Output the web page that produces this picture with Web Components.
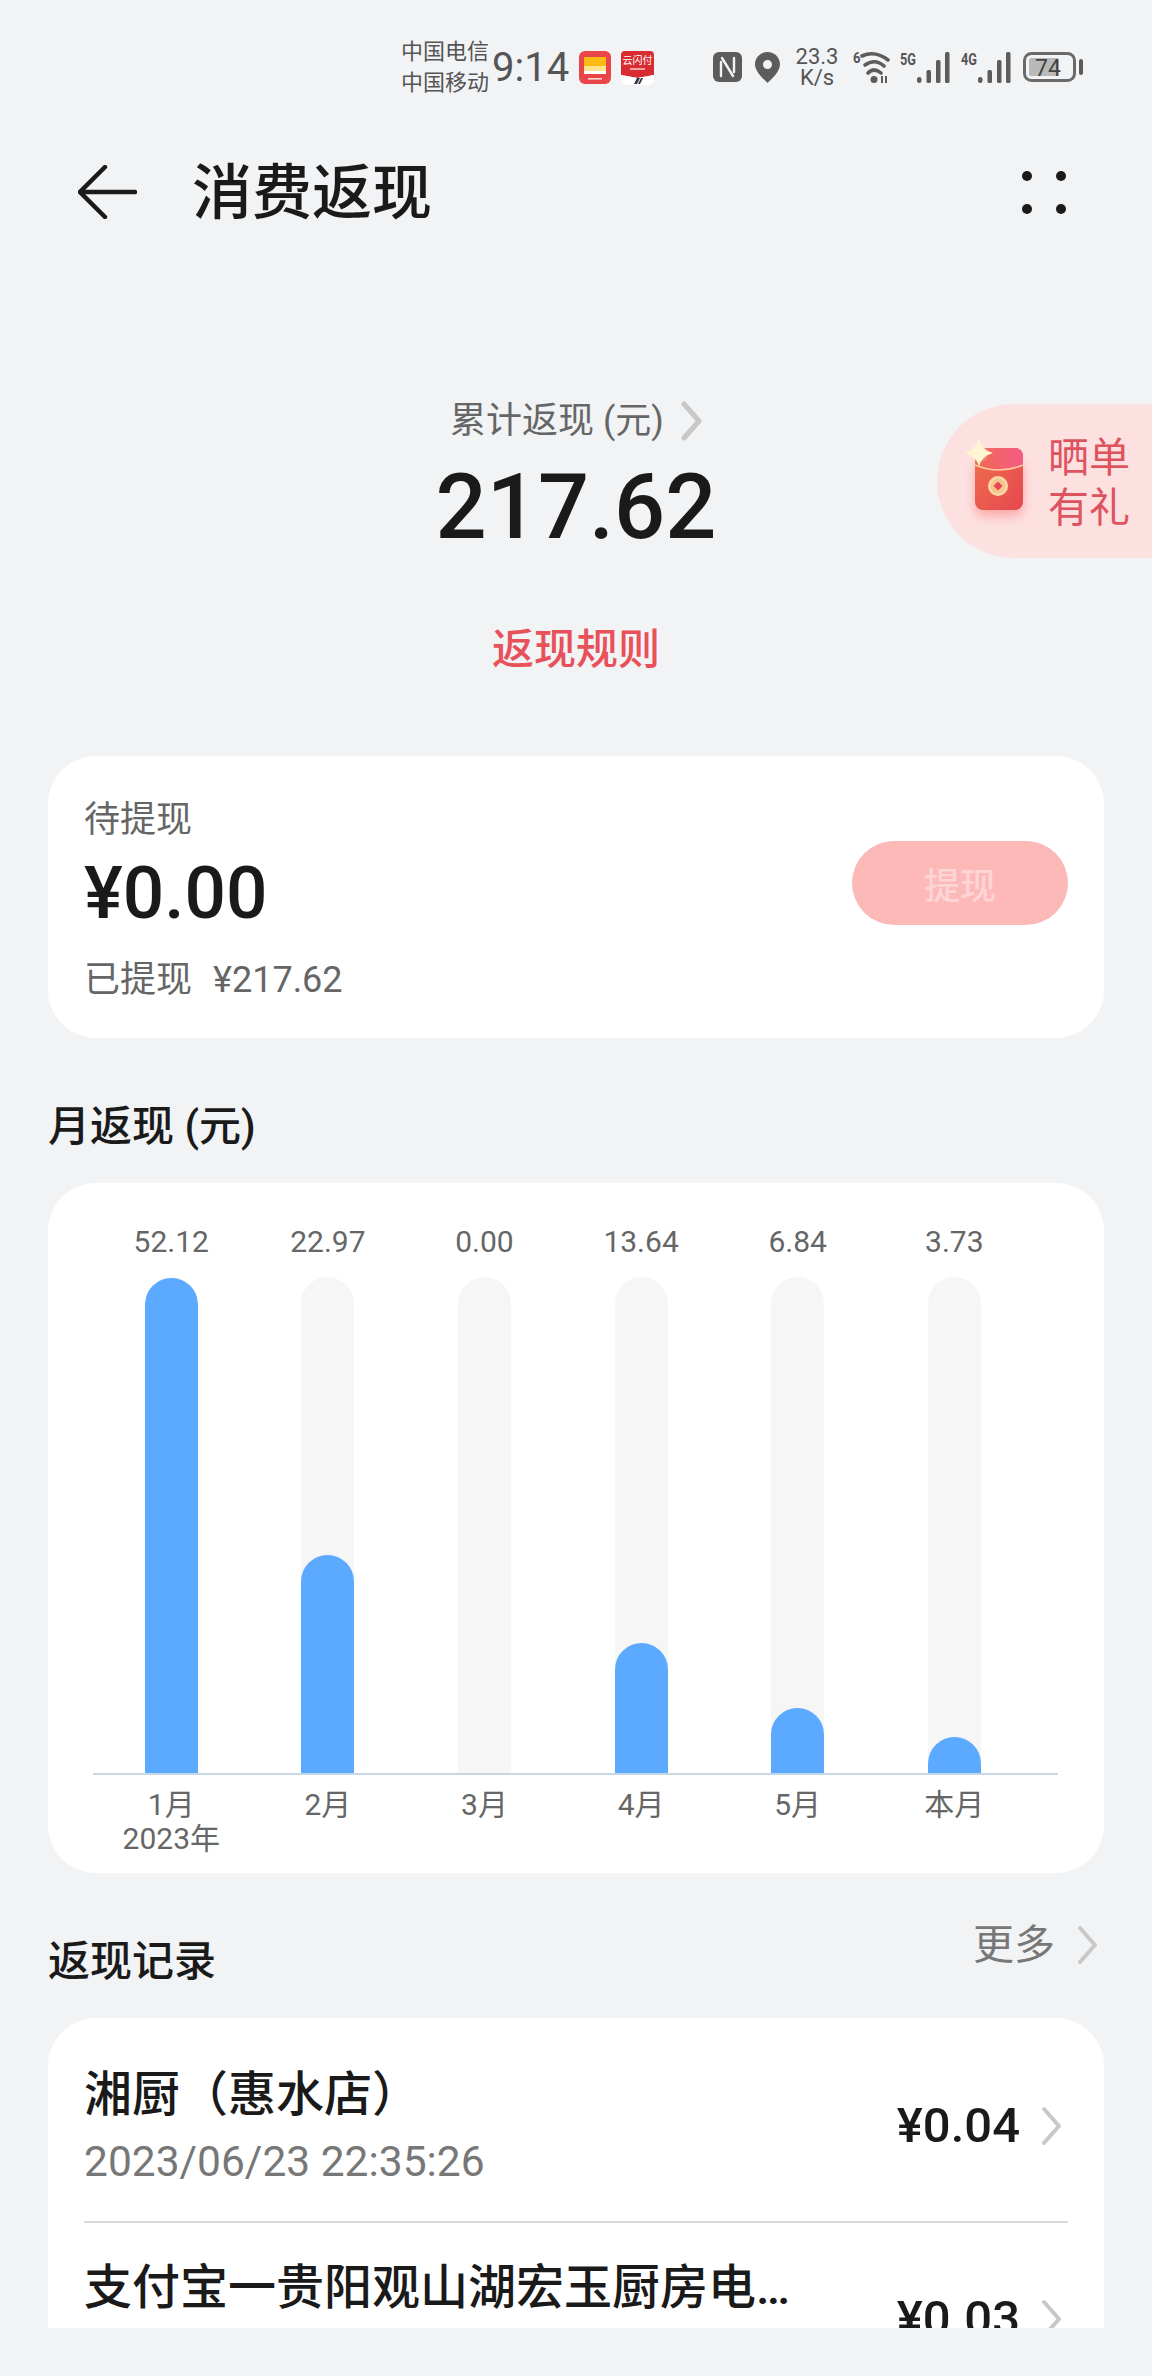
<!DOCTYPE html>
<html>
<head>
<meta charset="utf-8">
<title>消费返现</title>
<style>
	html,body{margin:0;padding:0;background:#f1f3f5;}
	body{font-family:Roboto,"Noto Sans CJK SC",sans-serif;color:#1a1a1a;}
	cash-page{height:2376px;}
</style>
</head>
<body>

<template id="tpl-page">
	<style>
		:host{display:block;position:relative;overflow:hidden;}
		.content{display:flex;flex-direction:column;padding:0 48px;height:2044px;overflow:hidden;box-sizing:border-box;}
	</style>
	<status-bar></status-bar>
	<top-bar>消费返现</top-bar>
	<share-badge></share-badge>
	<div class="content">
		<cash-summary></cash-summary>
		<withdraw-card></withdraw-card>
		<section-head style="height:145px">月返现 (元)</section-head>
		<month-chart></month-chart>
		<section-head style="height:145px" more>返现记录</section-head>
		<record-list>
			<record-row name="湘厨（惠水店）" time="2023/06/23 22:35:26" price="¥0.04"></record-row>
			<record-row name="支付宝一贵阳观山湖宏玉厨房电…" price="¥0.03"></record-row>
		</record-list>
	</div>
</template>

<script>
	function shadow(el, html){
		el.attachShadow({mode:'open'}).innerHTML = html;
	}
	const chev = (w,h,c,sw) => `<svg width="${w}" height="${h}" viewBox="0 0 21 40" fill="none"><path d="M3 3 L18 20 L3 37" stroke="${c}" stroke-width="${sw}" stroke-linecap="round" stroke-linejoin="round"/></svg>`;

	class CashPage extends HTMLElement{
		constructor(){
			super();
			this.attachShadow({mode:'open'}).appendChild(document.getElementById('tpl-page').content.cloneNode(true));
		}
	}

	class StatusBar extends HTMLElement{
		constructor(){
			super();
			// barras de senal, la misma para 5G y 4G
			const bars = `<rect x="0" y="25" width="4.500" height="6" rx="2.200"/><rect x="9.500" y="18" width="4.500" height="13" rx="1.500"/><rect x="19" y="8" width="4.500" height="23" rx="1.500"/><rect x="28" y="0" width="4.500" height="31" rx="1.500"/>`;
			shadow(this, `
			<style>
				:host{display:block;position:relative;height:100px;color:#555;}
				.row{display:flex;align-items:flex-start;padding:36px 0 0 401px;}
				.ops{font-size:22px;line-height:31px;width:91px;}
				.time{font-size:40px;line-height:46px;width:87px;margin-top:9px;}
				svg{display:block;flex:none;}
				.speed{width:46px;text-align:center;font-size:22px;line-height:21px;margin:10px 13px 0 14px;}
				text{font-family:Roboto,"Noto Sans CJK SC",sans-serif;}
			</style>
			<div class="row">
				<div class="ops">中国电信<br>中国移动</div>
				<div class="time">9:14</div>
				<svg style="margin:15px 10px 0 0" width="32" height="33" viewBox="0 0 32 33">
					<rect width="32" height="33" rx="6" fill="#ea4549"/>
					<rect x="5" y="6" width="22" height="9" fill="#fdbb12"/>
					<rect x="5" y="15" width="22" height="5" fill="#fde38a"/>
					<rect x="5" y="20" width="22" height="3" fill="#fff"/>
					<rect x="9" y="27" width="14" height="1.600" fill="#fbd5d5"/>
				</svg>
				<svg style="margin:15px 0 0 0" width="33" height="34" viewBox="0 0 33 34">
					<path d="M4 0H29a4 4 0 0 1 4 4V24L16.500 27 0 24V4a4 4 0 0 1 4-4Z" fill="#d92c32"/>
					<path d="M0 24L16.500 27 33 24V28a6 6 0 0 1-6 6H6a6 6 0 0 1-6-6Z" fill="#fff"/>
					<text x="16.500" y="13" font-size="10" fill="#fff" text-anchor="middle">云闪付</text>
					<rect x="9" y="17" width="15" height="2" fill="#f2a0a0"/>
					<path d="M13 33l3-6h3l-3 6ZM17 33l3-6h2l-3 6Z" fill="#334"/>
				</svg>
				<svg style="margin:16px 0 0 59px" width="29" height="30" viewBox="0 0 29 30">
					<rect width="29" height="30" rx="6" fill="#5c5c5c"/>
					<path d="M8 10 V24 M9 6 L20 24 M21 20 V6" stroke="#f1f3f5" stroke-width="2.400" fill="none" stroke-linecap="round"/>
				</svg>
				<svg style="margin:16px 0 0 13px" width="25" height="31" viewBox="0 0 25 31">
					<path fill-rule="evenodd" d="M12.500 0C5.600 0 0 5.500 0 12.300 0 20 9 27.500 12.500 31 16 27.500 25 20 25 12.300 25 5.500 19.400 0 12.500 0Zm0 8a4.500 4.500 0 1 1 0 9 4.500 4.500 0 0 1 0-9Z" fill="#5c5c5c"/>
				</svg>
				<div class="speed">23.3<br>K/s</div>
				<svg style="margin:15px 0 0 0" width="37" height="33" viewBox="0 0 37 33">
					<text x="0" y="12" font-size="15" font-weight="700" fill="#555" textLength="7.500" lengthAdjust="spacingAndGlyphs">6</text>
					<g fill="none" stroke="#5c5c5c" stroke-width="3.600" stroke-linecap="round">
						<path d="M9 5 Q22 -1 35 9"/><path d="M12 14 Q22 7 31 15"/><path d="M15 22 Q21 16 28 22"/>
					</g>
					<circle cx="21" cy="28.500" r="3.500" fill="#5c5c5c"/>
					<path d="M29 25v7M33 25v7" stroke="#5c5c5c" stroke-width="2"/>
				</svg>
				<svg style="margin:15px 0 0 10px" width="50" height="32" viewBox="0 0 50 32">
					<text x="0" y="14" font-size="16" font-weight="700" fill="#555" textLength="16" lengthAdjust="spacingAndGlyphs">5G</text>
					<g fill="#5c5c5c" transform="translate(17 1)">${bars}</g>
				</svg>
				<svg style="margin:15px 0 0 11px" width="50" height="32" viewBox="0 0 50 32">
					<text x="0" y="14" font-size="16" font-weight="700" fill="#555" textLength="16" lengthAdjust="spacingAndGlyphs">4G</text>
					<g fill="#5c5c5c" transform="translate(17 1)">${bars}</g>
				</svg>
				<svg style="margin:16px 0 0 12px" width="60" height="31" viewBox="0 0 60 31">
					<rect x="1.500" y="1.500" width="50" height="27" rx="7" fill="none" stroke="#6a6a6a" stroke-width="3"/>
					<rect x="6" y="6" width="30" height="18" rx="2" fill="#b9b9b9"/>
					<rect x="56" y="7" width="4" height="16" rx="2" fill="#5c5c5c"/>
					<text x="25" y="23.500" font-size="23" fill="#444" text-anchor="middle">74</text>
				</svg>
			</div>`);
		}
	}

	class TopBar extends HTMLElement{
		constructor(){
			super();
			shadow(this, `
			<style>
				:host{display:flex;align-items:center;height:184px;box-sizing:border-box;padding:0 86px 0 78px;}
				.title{font-size:60px;font-weight:500;margin:3px 0 0 55px;line-height:70px;color:#1a1a1a;}
				.dots{margin-left:auto;display:grid;grid-template-columns:10px 10px;gap:23px 24px;}
				.dots i{width:10px;height:10px;border-radius:50%;background:#1a1a1a;}
			</style>
			<svg width="59" height="54" viewBox="0 0 59 54" fill="none" stroke="#1a1a1a" stroke-width="4.500" stroke-linecap="round"><path d="M27 2 L2 27 L27 52"/><path d="M3 27 H57"/></svg>
			<div class="title"><slot></slot></div>
			<div class="dots"><i></i><i></i><i></i><i></i></div>`);
		}
	}

	class ShareBadge extends HTMLElement{
		constructor(){
			super();
			shadow(this, `
			<style>
				:host{position:absolute;left:937px;top:404px;width:215px;height:154px;border-radius:77px 0 0 77px;background:#fde1e1;display:flex;align-items:center;}
				svg{margin:0 0 18px 24px;flex:none;overflow:visible;}
				.txt{margin:4px 0 0 19px;font-size:41px;line-height:50px;color:#dd5460;}
			</style>
			<svg width="68" height="80" viewBox="0 0 68 80">
				<defs>
					<linearGradient id="r1" x1="0" y1="0" x2="1" y2="1"><stop offset="0" stop-color="#f0704e"/><stop offset="1" stop-color="#e5474f"/></linearGradient>
					<linearGradient id="r2" x1="0" y1="0" x2="1" y2="0"><stop offset="0" stop-color="#f06a50"/><stop offset="1" stop-color="#f45c86"/></linearGradient>
					<filter id="b1" x="-40%" y="-40%" width="180%" height="180%"><feGaussianBlur stdDeviation="6"/></filter>
					<filter id="b2" x="-40%" y="-40%" width="180%" height="180%"><feGaussianBlur stdDeviation="2"/></filter>
				</defs>
				<rect x="14" y="30" width="48" height="54" rx="8" fill="#fb8f8f" opacity=".7" filter="url(#b1)"/>
				<rect x="14" y="16" width="48" height="62" rx="8" fill="url(#r1)"/>
				<path d="M14 24a8 8 0 0 1 8-8H54a8 8 0 0 1 8 8V32Q38 44 14 32Z" fill="url(#r2)"/>
				<path d="M14 33Q38 43 62 33" stroke="#ffc9a0" stroke-width="1.500" fill="none"/>
				<circle cx="37" cy="54" r="10" fill="#fcd9a8"/>
				<circle cx="37" cy="54" r="7.500" fill="#f6c48e"/>
				<rect x="33.800" y="50.800" width="6.400" height="6.400" transform="rotate(45 37 54)" fill="#e2484f"/>
				<g transform="translate(4 7)">
					<circle cx="14" cy="14" r="7" fill="#fff3c8" opacity=".8" filter="url(#b2)"/>
					<path d="M14 0 Q16 11 28 14 Q16 17 14 28 Q12 17 0 14 Q12 11 14 0Z" fill="#fff6d4"/>
				</g>
			</svg>
			<div class="txt">晒单<br>有礼</div>`);
		}
	}

	class CashSummary extends HTMLElement{
		constructor(){
			super();
			shadow(this, `
			<style>
				:host{display:flex;flex-direction:column;align-items:center;height:472px;box-sizing:border-box;padding-top:116px;}
				.lbl{display:flex;align-items:center;font-size:36px;line-height:42px;color:#666;height:42px;}
				.lbl svg{margin-left:17px;}
				.num{font-size:90px;font-weight:500;line-height:104px;margin-top:14px;color:#1a1a1a;}
				.rule{font-size:42px;font-weight:500;line-height:48px;color:#e8505a;margin-top:66px;}
			</style>
			<div class="lbl">累计返现 (元)${chev(21,40,'#c8c8c8',5)}</div>
			<div class="num">217.62</div>
			<div class="rule">返现规则</div>`);
		}
	}

	class WithdrawCard extends HTMLElement{
		constructor(){
			super();
			shadow(this, `
			<style>
				:host{display:flex;align-items:center;justify-content:space-between;height:282px;flex:none;box-sizing:border-box;padding:0 36px;background:#fff;border-radius:48px;}
				.l{display:flex;flex-direction:column;padding-top:6px;}
				.a{font-size:36px;line-height:42px;color:#666;}
				.b{font-size:73px;font-weight:500;line-height:86px;margin-top:9px;color:#1a1a1a;}
				.c{font-size:36px;line-height:42px;color:#666;margin-top:23px;display:flex;gap:21px;}
				.btn{width:216px;height:84px;margin-bottom:29px;border-radius:42px;background:#fdb8b8;color:#fdd5d5;font-size:36px;font-weight:500;display:flex;align-items:center;justify-content:center;}
			</style>
			<div class="l">
				<div class="a">待提现</div>
				<div class="b">¥0.00</div>
				<div class="c"><span>已提现</span><span>¥217.62</span></div>
			</div>
			<div class="btn">提现</div>`);
		}
	}

	class SectionHead extends HTMLElement{
		constructor(){
			super();
			const more = this.hasAttribute('more');
			shadow(this, `
			<style>
				:host{display:flex;flex:none;box-sizing:border-box;align-items:flex-start;justify-content:space-between;}
				.t{font-size:42px;line-height:48px;font-weight:500;color:#1a1a1a;margin-top:65px;}
				.m{display:flex;align-items:center;gap:22px;font-size:41px;line-height:48px;color:#777;margin-top:48px;margin-right:6px;}
			</style>
			<div class="t"><slot></slot></div>
			${more ? `<div class="m">更多${chev(21,40,'#c8c8c8',4)}</div>` : ''}`);
		}
	}

	class MonthChart extends HTMLElement{
		constructor(){
			super();
			const data = [
				['52.12',495,'1月','2023年'],
				['22.97',218,'2月'],
				['0.00',0,'3月'],
				['13.64',130,'4月'],
				['6.84',65,'5月'],
				['3.73',36,'本月']
			];
			shadow(this, `
			<style>
				:host{display:block;flex:none;height:690px;box-sizing:border-box;background:#fff;border-radius:48px;padding:0 46px 0 45px;}
				.cols{display:grid;grid-template-columns:repeat(6,156.6px);height:100%;}
			</style>
			<div class="cols">${data.map(d => `<chart-col val="${d[0]}" h="${d[1]}" m="${d[2]}" y="${d[3]||''}"></chart-col>`).join('')}</div>`);
		}
	}

	class ChartCol extends HTMLElement{
		constructor(){
			super();
			const h = +this.getAttribute('h');
			const y = this.getAttribute('y');
			shadow(this, `
			<style>
				:host{display:flex;flex-direction:column;align-items:center;font-size:30px;color:#666;}
				.v{line-height:34px;margin-top:42px;height:34px;}
				.track{width:53px;height:496px;margin-top:18px;background:#f6f6f6;border-radius:27px 27px 0 0;display:flex;align-items:flex-end;overflow:hidden;}
				.bar{width:53px;background:#5caaff;border-radius:27px 27px 0 0;}
				.line{align-self:stretch;height:2px;background:#c5d8e6;margin-right:-25px;}
				.m{line-height:34px;margin-top:13px;}
				.y{line-height:34px;}
			</style>
			<div class="v">${this.getAttribute('val')}</div>
			<div class="track"><div class="bar" style="height:${h}px"></div></div>
			<div class="line"></div>
			<div class="m">${this.getAttribute('m')}</div>
			${y ? `<div class="y">${y}</div>` : ''}`);
		}
	}

	class RecordList extends HTMLElement{
		constructor(){
			super();
			shadow(this, `
			<style>
				:host{display:block;flex:1;background:#fff;border-radius:48px 48px 0 0;padding:13px 36px 0 36px;overflow:hidden;}
			</style>
			<slot></slot>`);
		}
	}

	class RecordRow extends HTMLElement{
		constructor(){
			super();
			shadow(this, `
			<style>
				:host{display:flex;align-items:center;height:192px;box-sizing:border-box;}
				:host(:not(:last-child)){border-bottom:2px solid #d9d9d9;}
				.l{flex:none;width:760px;display:flex;flex-direction:column;}
				.n{font-size:48px;line-height:58px;font-weight:500;color:#1a1a1a;white-space:nowrap;}
				.t{font-size:42.500px;line-height:50px;height:50px;color:#777;margin-top:13px;}
				.p{margin-left:auto;font-size:49px;font-weight:500;line-height:56px;color:#1a1a1a;}
				svg{margin:0 6px 0 21px;flex:none;}
			</style>
			<div class="l">
				<div class="n">${this.getAttribute('name')}</div>
				<div class="t">${this.getAttribute('time') || ''}</div>
			</div>
			<div class="p">${this.getAttribute('price')}</div>
			${chev(21,40,'#c8c8c8',4)}`);
		}
	}

	customElements.define('status-bar',StatusBar);
	customElements.define('top-bar',TopBar);
	customElements.define('share-badge',ShareBadge);
	customElements.define('cash-summary',CashSummary);
	customElements.define('withdraw-card',WithdrawCard);
	customElements.define('section-head',SectionHead);
	customElements.define('chart-col',ChartCol);
	customElements.define('month-chart',MonthChart);
	customElements.define('record-row',RecordRow);
	customElements.define('record-list',RecordList);
	customElements.define('cash-page',CashPage);
</script>

<cash-page></cash-page>

</body>
</html>
